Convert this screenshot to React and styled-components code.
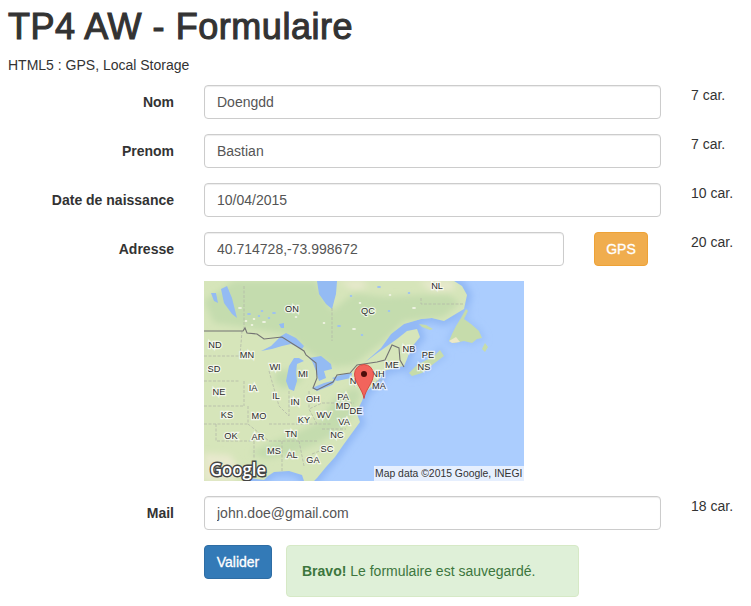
import React from 'react'
import styled, {createGlobalStyle} from 'styled-components'

const GlobalStyle = createGlobalStyle`
    * {
        box-sizing: border-box;
    }

    body {
        margin: 0;
        background: #fff;
        color: #333;
        font-family: "Liberation Sans", Arial, sans-serif;
        font-size: 14px;
        line-height: 20px;
    }
`

const Page = styled.div`
    padding: 7px 8px 0;
`

const Title = styled.h1`
    margin: 0 0 8px;
    font-size: 36px;
    line-height: 40px;
    font-weight: 400;
    letter-spacing: .55px;
    -webkit-text-stroke: 1.1px #333;
`

const Subtitle = styled.p`
    margin: 0 0 10px;
`

const Form = styled.form`
    display: grid;
    grid-template-columns: 166px 457px 1fr;
    column-gap: 30px;
    row-gap: 15px;
`

const Label = styled.label`
    grid-column: 1;
    padding-top: 7px;
    text-align: right;
    font-weight: 700;
`

const Field = styled.div`
    grid-column: 2;
    display: flex;
    align-items: flex-start;
    gap: ${({gap}) => gap || 0}px;
`

const Input = styled.input`
    display: block;
    width: ${({width}) => width || '100%'};
    height: 34px;
    padding: 6px 12px;
    border: 1px solid #ccc;
    border-radius: 4px;
    box-shadow: inset 0 1px 1px rgba(0, 0, 0, .075);
    background: #fff;
    color: #555;
    font: inherit;
`

const Count = styled.div`
    white-space: nowrap;
`

const Button = styled.button`
    flex: none;
    width: ${({width}) => width}px;
    height: 34px;
    padding: 0;
    border: 1px solid ${({border}) => border};
    border-radius: 4px;
    background: ${({color}) => color};
    color: #fff;
    font: inherit;
    -webkit-text-stroke: .3px #fff;
`

const Alert = styled.div`
    width: 293px;
    padding: 15px;
    border: 1px solid #d6e9c6;
    border-radius: 4px;
    background: #dff0d8;
    color: #3c763d;
`

const MapFrame = styled.div`
    position: relative;
    width: 320px;
    height: 200px;
    overflow: hidden;
`

const Attribution = styled.span`
    position: absolute;
    right: 0;
    bottom: 0;
    width: 150px;
    height: 15px;
    padding-left: 1px;
    background: #e6effe;
    color: #333;
    font-size: 10.4px;
    line-height: 15px;
    white-space: nowrap;
`

const land = '0,0 250,0 258,5 263,14 260,28 240,40 228,37 217,38 200,43 187,53 177,67 168,75 160,82 172,73 193,58 203,50 213,48 216,56 207,67 203,78 200,85 190,87 180,90 176,97 170,104 164,109 160,114 158,120 155,126 153,133 156,141 148,152 140,163 131,176 122,186 113,197 110,200 100,200 98,194 85,190 70,191 64,195 60,199 45,197 38,200 0,200'
const newfoundland = '245,60 248,53 252,45 257,37 262,28 264,30 260,38 267,43 275,50 278,57 273,58 268,62 260,60 250,62'
const novaScotia = '205,92 213,84 230,75 236,69 240,75 228,84 218,92 208,95'
const islands = [
    '215,43 222,44 229,48 226,49 218,46',
    '281,62 284,66 281,71 278,68',
    '220,71 228,70 232,72 224,74',
]

const forest = [
    '0,20 30,0 112,0 128,30 150,12 180,16 215,14 245,14 256,22 240,36 200,40 178,62 150,84 130,86 105,72 85,54 60,50 40,46 10,42',
    '72,90 96,88 98,100 80,108 70,100',
    '130,118 150,106 158,112 150,130 138,148 115,162 90,172 62,178 46,172 66,162 92,152 116,140',
]
const sand = [
    '134,0 160,0 163,6 150,9',
    '214,0 250,0 250,9 228,10',
    '0,172 26,174 34,186 30,200 0,200',
]
const lakes = [
    '113,0 133,0 132,13 128,28 122,23 115,13',
    '17,8 23,5 28,17 33,37 28,33 20,22',
    '7,12 12,12 14,22 10,20',
    '57,70 67,65 77,55 82,52 92,57 100,65 98,68 87,63 78,65 68,68',
    '82,100 85,85 90,77 95,77 100,80 93,83 92,92 93,100 90,110 85,108',
    '105,77 117,75 127,83 128,88 120,90 122,97 115,100 112,90 108,80',
    '108,107 120,102 132,99 128,104 113,110',
    '128,97 140,93 148,92 147,97 133,100',
    '75,43 80,42 80,47 77,47',
]
const specks = [
    [45, 33], [50, 38], [55, 35], [60, 41], [65, 37], [48, 44], [70, 32], [42, 40], [58, 30], [36, 27],
    [147, 15], [156, 22], [175, 6], [186, 14], [205, 12], [150, 48], [158, 54],
    [120, 42], [135, 45], [92, 36], [185, 30], [210, 27],
]

const stateLines = [
    'M0 75H38', 'M40 5V50', 'M0 100H35', 'M0 125H40', 'M0 143H44', 'M12 143V160H50', 'M50 160V178', 'M40 100V125',
    'M36 75L38 50', 'M44 125V143L65 160', 'M65 160H113', 'M78 160V190', 'M95 160L100 185', 'M105 110V128',
    'M85 110V135', 'M65 90L75 125L85 135', 'M65 143H128', 'M113 143L105 128L118 122', 'M118 122H150',
    'M108 173L128 165', 'M118 148H142', 'M128 27V60', 'M217 17V23H260', 'M150 105L178 99',
]
const border = '0,50 39,50 41,47 43,52 53,53 60,58 78,56 100,70 102,74 112,82 113,97 109,107 113,109 129,101 133,94 146,92 153,84 173,81 181,79 188,64 195,67 196,79 200,86'

const labels = [
    ['NL', 233, 5], ['ON', 88, 28], ['QC', 164, 30], ['ND', 11, 64], ['MN', 43, 74], ['WI', 71, 86], ['SD', 10, 88],
    ['MI', 99, 93], ['NB', 205, 68], ['PE', 224, 74], ['NS', 220, 86], ['ME', 188, 84], ['NH', 174, 93], ['N', 149, 100],
    ['MA', 175, 105], ['NE', 15, 111], ['IA', 49, 107], ['IL', 72, 115], ['IN', 91, 121], ['OH', 109, 118], ['PA', 139, 116],
    ['MD', 139, 125], ['DE', 152, 130], ['WV', 120, 134], ['KS', 23, 134], ['MO', 55, 135], ['KY', 100, 139], ['VA', 140, 141],
    ['OK', 27, 155], ['AR', 54, 156], ['TN', 87, 153], ['NC', 133, 154], ['SC', 123, 168], ['MS', 70, 170], ['AL', 88, 174], ['GA', 109, 179],
]

function MapDrawing() {
    return (
        <svg width="320" height="200" viewBox="0 0 320 200" style={{display: 'block'}}>
            <defs>
                <filter id="soft" x="-5%" y="-5%" width="110%" height="110%">
                    <feGaussianBlur stdDeviation="0.6" />
                </filter>
                <filter id="softer" x="-10%" y="-10%" width="120%" height="120%">
                    <feGaussianBlur stdDeviation="3" />
                </filter>
                <clipPath id="landClip">
                    <polygon points={land} />
                </clipPath>
            </defs>
            <rect width="320" height="200" fill="#abcdfe" />
            <g filter="url(#softer)">
                <polygon points={land} fill="#93b9f5" stroke="#93b9f5" strokeWidth="10" />
                <polygon points={newfoundland} fill="#9fc3f9" stroke="#9fc3f9" strokeWidth="6" />
                <polygon points={novaScotia} fill="#9fc3f9" stroke="#9fc3f9" strokeWidth="6" />
            </g>
            <polygon points={land} fill="#d6e5ba" filter="url(#soft)" />
            <g clipPath="url(#landClip)">
                <g filter="url(#softer)">
                    {forest.map(p => <polygon key={p} points={p} fill="#c4dcae" />)}
                    {sand.map(p => <polygon key={p} points={p} fill="#e8e9cd" />)}
                </g>
            </g>
            <g filter="url(#soft)">
                <polygon points={newfoundland} fill="#c6dcab" />
                <polygon points="245,60 252,56 256,61 248,62" fill="#ece8c8" />
                <polygon points={novaScotia} fill="#c6dcab" />
                {islands.map(p => <polygon key={p} points={p} fill="#c6dcab" />)}
                {lakes.map(p => <polygon key={p} points={p} fill="#94bbf3" />)}
                {specks.map(([x, y], i) => (
                    <ellipse key={i} cx={x} cy={y} rx={i % 3 === 0 ? 2 : 1.3} ry="1" fill={i % 2 ? '#f0f4e4' : '#9cc0f4'} />
                ))}
            </g>
            <g fill="none" stroke="#b4b9a8" strokeWidth=".8" strokeDasharray="3 1.5">
                {stateLines.map(d => <path key={d} d={d} />)}
            </g>
            <polyline points={border} fill="none" stroke="#737373" strokeWidth="1.1" />
            <g fontFamily="'Liberation Sans', Arial, sans-serif" fontSize="9.2" fill="#2c2c2c" textAnchor="middle">
                {labels.map(([name, x, y]) => (
                    <text key={name} x={x} y={y + 3} stroke="#fff" strokeOpacity=".7" strokeWidth="2.4" paintOrder="stroke">{name}</text>
                ))}
            </g>
            <path
                d="M160 117.5C158.5 108 150.5 102 150.5 93a9.5 9.5 0 0 1 19 0C169.5 102 161.5 108 160 117.5Z"
                fill="#f2645c"
                stroke="#cf3a33"
                strokeWidth=".8"
            />
            <circle cx="160" cy="93" r="3" fill="#4d0d0a" />
            <text
                x="6"
                y="195"
                fontFamily="'Open Sans', 'Liberation Sans', sans-serif"
                fontSize="18"
                fontWeight="600"
                fill="#fff"
                stroke="#444"
                strokeWidth="3"
                paintOrder="stroke"
                textLength="56"
                lengthAdjust="spacingAndGlyphs"
            >
                Google
            </text>
        </svg>
    )
}

function App() {
    return (
        <Page>
            <GlobalStyle />
            <Title>TP4 AW - Formulaire</Title>
            <Subtitle>HTML5 : GPS, Local Storage</Subtitle>
            <Form onSubmit={e => e.preventDefault()}>
                <Label>Nom</Label>
                <Field><Input defaultValue="Doengdd" /></Field>
                <Count>7 car.</Count>

                <Label>Prenom</Label>
                <Field><Input defaultValue="Bastian" /></Field>
                <Count>7 car.</Count>

                <Label>Date de naissance</Label>
                <Field><Input defaultValue="10/04/2015" /></Field>
                <Count>10 car.</Count>

                <Label>Adresse</Label>
                <Field gap={30}>
                    <Input width="360px" defaultValue="40.714728,-73.998672" />
                    <Button type="button" width={54} color="#f0ad4e" border="#eea236">GPS</Button>
                </Field>
                <Count>20 car.</Count>

                <Field>
                    <MapFrame>
                        <MapDrawing />
                        <Attribution>Map data ©2015 Google, INEGI</Attribution>
                    </MapFrame>
                </Field>

                <Label>Mail</Label>
                <Field><Input defaultValue="john.doe@gmail.com" /></Field>
                <Count>18 car.</Count>

                <Field gap={14}>
                    <Button type="submit" width={68} color="#337ab7" border="#2e6da4">Valider</Button>
                    <Alert><strong>Bravo!</strong> Le formulaire est sauvegardé.</Alert>
                </Field>
            </Form>
        </Page>
    )
}

export default App
